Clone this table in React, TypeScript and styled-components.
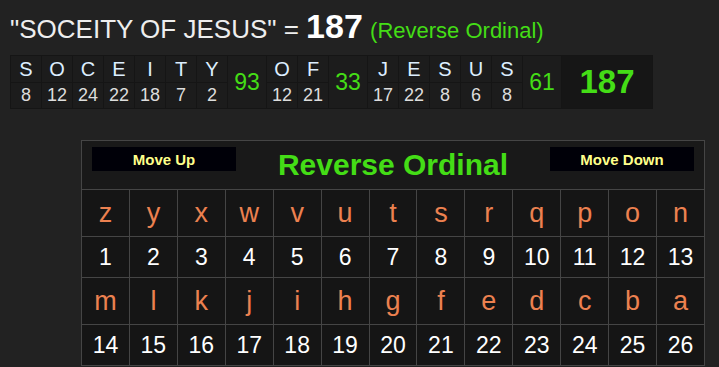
import { createGlobalStyle, styled } from "styled-components";

const words = [
  { letters: "SOCEITY", values: [8, 12, 24, 22, 18, 7, 2], sum: 93 },
  { letters: "OF", values: [12, 21], sum: 33 },
  { letters: "JESUS", values: [17, 22, 8, 6, 8], sum: 61 },
];

const alphabet = "zyxwvutsrqponmlkjihgfedcba".split("");
const rows = [alphabet.slice(0, 13), alphabet.slice(13)];

const App = () => {
  return (
    <>
      <GlobalStyle />
      <Page>
        <Title>
          "SOCEITY OF JESUS" = <Total>187</Total> <CipherName>(Reverse Ordinal)</CipherName>
        </Title>
        <Breakdown>
          {words.map((word) => (
            <WordGroup key={word.letters}>
              {word.letters.split("").map((ch, i) => (
                <LetterCol key={i}>
                  <LetterCell>{ch}</LetterCell>
                  <ValueCell>{word.values[i]}</ValueCell>
                </LetterCol>
              ))}
              <SumCell>{word.sum}</SumCell>
            </WordGroup>
          ))}
          <TotalCell>187</TotalCell>
        </Breakdown>

        <ChartTable>
          <tbody>
            <tr>
              <HeaderCell colSpan={13}>
                <HeaderBar>
                  <MoveButton>Move Up</MoveButton>
                  <ChartTitle>Reverse Ordinal</ChartTitle>
                  <MoveButton>Move Down</MoveButton>
                </HeaderBar>
              </HeaderCell>
            </tr>
            {rows.map((row, r) => [
              <tr key={`l${r}`}>
                {row.map((ch) => (
                  <ChartLetter key={ch}>{ch}</ChartLetter>
                ))}
              </tr>,
              <tr key={`n${r}`}>
                {row.map((ch, i) => (
                  <ChartNumber key={ch}>{r * 13 + i + 1}</ChartNumber>
                ))}
              </tr>,
            ])}
          </tbody>
        </ChartTable>
      </Page>
    </>
  );
};

export default App;

const GlobalStyle = createGlobalStyle`
  html, body {
    margin: 0;
    background: #222222;
  }
  body {
    font-family: "Liberation Sans", Arial, sans-serif;
  }
`;

const Page = styled.div`
  width: 719px;
  height: 367px;
  padding: 9px 0 0 10px;
  box-sizing: border-box;
  overflow: hidden;
`;

const Title = styled.div`
  color: #eeeeee;
  font-size: 26px;
  line-height: 34px;
  white-space: nowrap;
`;

const Total = styled.span`
  font-weight: bold;
  font-size: 34px;
  color: #ffffff;
`;

const CipherName = styled.span`
  font-size: 22px;
  color: #44dd16;
`;

const Breakdown = styled.div`
  display: inline-flex;
  margin-top: 7px;
  background: #151515;
  padding: 1px;
  gap: 1px;
`;

const WordGroup = styled.div`
  display: flex;
  gap: 1px;
`;

const LetterCol = styled.div`
  display: flex;
  flex-direction: column;
  gap: 1px;
  width: 30px;
`;

const LetterCell = styled.div`
  height: 26px;
  background: #1c1c1c;
  color: #dceeff;
  font-size: 20px;
  display: flex;
  align-items: center;
  justify-content: center;
`;

const ValueCell = styled.div`
  height: 25px;
  background: #1c1c1c;
  color: #dddddd;
  font-size: 18px;
  display: flex;
  align-items: center;
  justify-content: center;
`;

const SumCell = styled.div`
  width: 38px;
  background: #1c1c1c;
  color: #44dd16;
  font-size: 23px;
  display: flex;
  align-items: center;
  justify-content: center;
`;

const TotalCell = styled.div`
  width: 90px;
  background: #161616;
  color: #44dd16;
  font-size: 33px;
  font-weight: bold;
  display: flex;
  align-items: center;
  justify-content: center;
`;

const ChartTable = styled.table`
  margin: 31px 0 0 71px;
  border-collapse: collapse;
  border: 1px solid #454545;
  background: #151515;
  width: 624px;
  table-layout: fixed;
`;

const HeaderCell = styled.td`
  height: 48px;
  padding: 0;
  border: 1px solid #454545;
  background: #191919;
  vertical-align: top;
`;

const HeaderBar = styled.div`
  display: flex;
  align-items: flex-start;
  justify-content: space-between;
  padding: 6px 10px 0 10px;
`;

const MoveButton = styled.div`
  width: 144px;
  height: 24px;
  background: #000008;
  color: #ffff8a;
  font-weight: bold;
  font-size: 15px;
  display: flex;
  align-items: center;
  justify-content: center;
`;

const ChartTitle = styled.div`
  color: #44dd16;
  font-weight: bold;
  font-size: 30px;
  line-height: 34px;
  margin-top: 1px;
`;

const ChartLetter = styled.td`
  height: 46px;
  padding: 0;
  border: 1px solid #454545;
  text-align: center;
  color: #ec8150;
  font-size: 27px;
`;

const ChartNumber = styled.td`
  height: 40px;
  padding: 0;
  border: 1px solid #454545;
  text-align: center;
  color: #ffffff;
  font-size: 23px;
`;
